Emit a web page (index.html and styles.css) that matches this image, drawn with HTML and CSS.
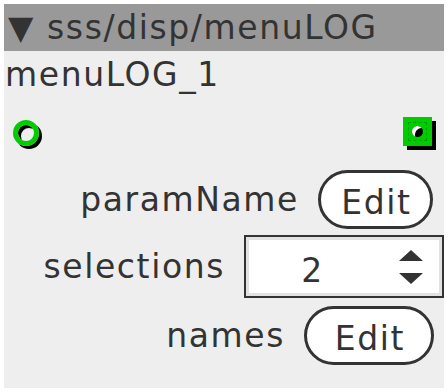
FILE: index.html
```html
<!DOCTYPE html>
<html lang="en">
  <head>
    <meta charset="UTF-8" />
    <title>menuLOG</title>
    <link rel="stylesheet" href="styles.css">
  </head>
  <body>
    <div class="panel">
      <div class="header">▼ sss/disp/menuLOG</div>
      <div class="name">menuLOG_1</div>

      <div class="ports">
        <span class="inlet"></span>
        <span class="outlet"><span class="dot"></span></span>
      </div>

      <div class="row first">
        <span class="label">paramName</span>
        <button class="edit">Edit</button>
      </div>

      <div class="row second">
        <span class="label">selections</span>
        <div class="number">
          <span class="value">2</span>
          <span class="spin">
            <svg width="24" height="36" viewBox="0 0 24 36">
              <polygon points="12,1 24,12 0,12" fill="#333" />
              <polygon points="0,24 24,24 12,35" fill="#333" />
            </svg>
          </span>
        </div>
      </div>

      <div class="row third">
        <span class="label">names</span>
        <button class="edit wide">Edit</button>
      </div>
    </div>
  </body>
</html>
```

FILE: styles.css
```css
body {
  margin: 0;
  padding: 4px;
  background-color: #fff;
  font-family: "DejaVu Sans", Verdana, sans-serif;
  font-size: 33px;
  letter-spacing: 1.6px;
  color: #333;
}

.panel {
  width: 440px;
  height: 384px;
  background-color: #eee;
  display: flex;
  flex-direction: column;
}

.header {
  background-color: #999;
  height: 47px;
  line-height: 47px;
  padding-left: 4px;
  white-space: nowrap;
}

.name {
  line-height: 47px;
  padding-left: 1px;
}

.ports {
  display: flex;
  justify-content: space-between;
  align-items: flex-start;
  padding: 19px 12px 0 9px;
  height: 33px;
}

.inlet {
  margin-top: 3px;
  width: 16px;
  height: 16px;
  border: 5px solid #0c0;
  border-radius: 50%;
  box-shadow: 3px 3px 0 #000, inset 3px 3px 0 #000;
}

.outlet {
  position: relative;
  width: 29px;
  height: 29px;
  background-color: #0c0;
  box-shadow: 4px 4px 0 #000;
  display: flex;
  align-items: center;
  justify-content: center;
}

.outlet::before {
  content: "";
  position: absolute;
  inset: 5px;
  border: 1px dashed rgba(0, 0, 0, 0.2);
}

.dot {
  position: relative;
  width: 11px;
  height: 11px;
  border-radius: 50%;
  background-color: #000;
  box-shadow: inset 4px 3px 0 -1px #fff;
}

.row {
  display: flex;
  justify-content: flex-end;
  align-items: center;
  gap: 19px;
}

.first {
  margin-top: 20px;
}

.second {
  margin-top: 6px;
}

.third {
  margin-top: 8px;
}

.edit {
  font-family: inherit;
  font-size: 33px;
  letter-spacing: 1.6px;
  color: #333;
  background-color: #fff;
  border: 3px solid #333;
  border-radius: 30px;
  width: 115px;
  height: 59px;
  padding: 5px 0 0 2px;
  margin-right: 11px;
}

.edit.wide {
  width: 130px;
  margin-right: 10px;
}

.number {
  width: 200px;
  height: 63px;
  box-sizing: border-box;
  border: 2px solid #333;
  background-color: #fff;
  box-shadow: inset 0 0 0 3px #e2e2e2;
  display: flex;
  align-items: center;
}

.value {
  flex: 1;
  text-align: center;
  padding-top: 7px;
}

.spin {
  display: flex;
  padding: 0 19px 0 20px;
}
```
